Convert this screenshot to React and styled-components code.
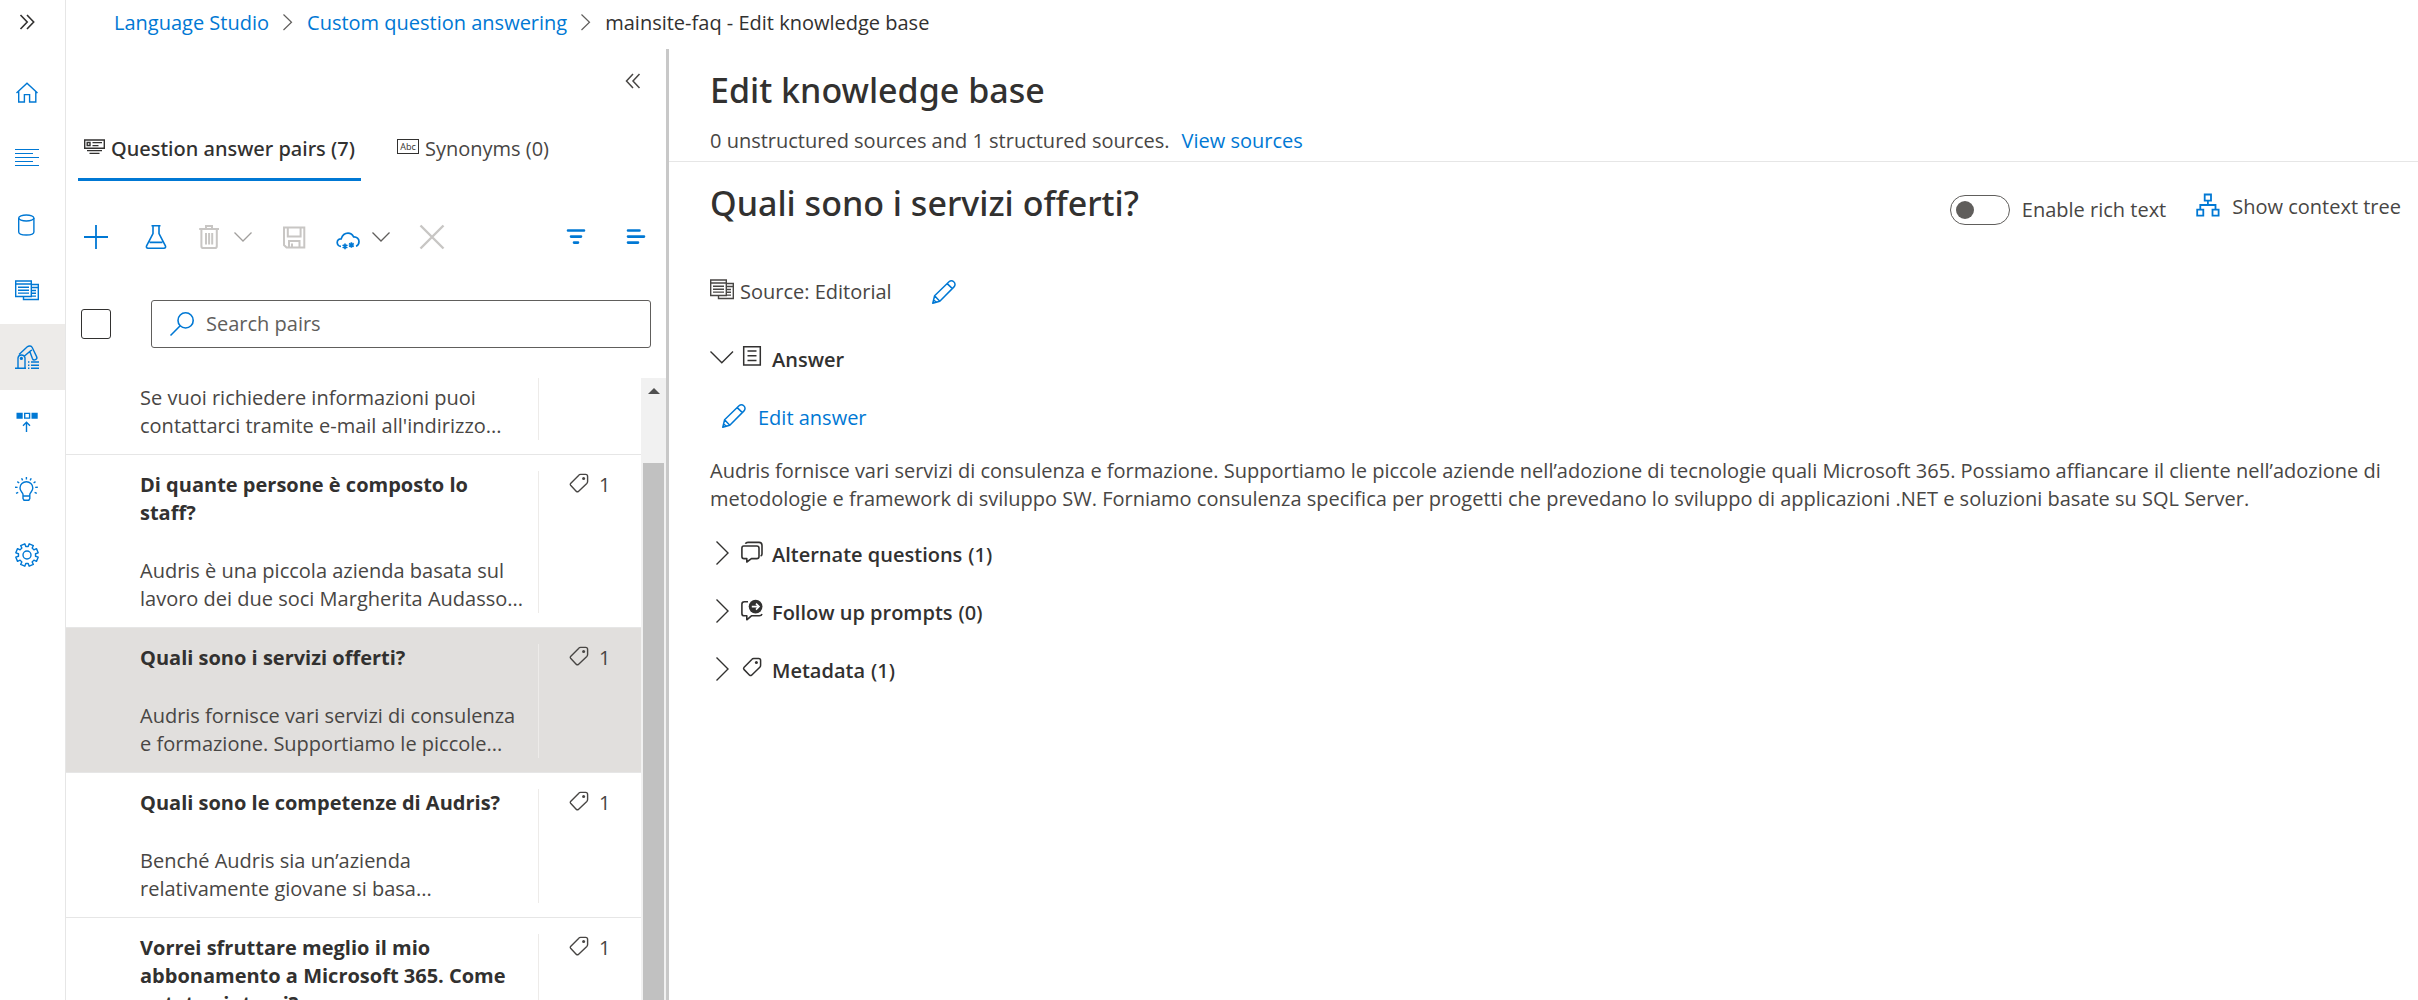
import React from "react";
import styled, { createGlobalStyle } from "styled-components";

const blue = "#0078d4";
const ink = "#323130";
const body = "#484644";
const disabled = "#c8c6c4";
const line = "#e6e6e6";

const GlobalStyle = createGlobalStyle`
  *, *::before, *::after { box-sizing: border-box; }
  html, body, #root { height: 100%; }
  body {
    margin: 0;
    background: #fff;
    color: ${ink};
    font: 400 20px/28px "Open Sans", "Noto Sans", sans-serif;
  }
  h1, h2, h3, p, ul, ol { margin: 0; padding: 0; }
  ul, ol { list-style: none; }
  button {
    font: inherit;
    color: inherit;
    background: none;
    border: 0;
    padding: 0;
    text-align: left;
    cursor: pointer;
  }
  a { color: ${blue}; text-decoration: none; }
`;

const Shell = styled.div`
  display: flex;
  height: 100vh;
  overflow: hidden;
`;

const Rail = styled.nav`
  flex: 0 0 66px;
  border-right: 1px solid ${line};
`;

const RailToggle = styled.button`
  display: flex;
  align-items: center;
  width: 100%;
  height: 44px;
  margin-bottom: 16px;
  padding-left: 15px;
  color: ${ink};
`;

const RailLink = styled.a`
  display: flex;
  align-items: center;
  height: 66px;
  padding-left: 15px;
  color: ${blue};
  background: ${(p) => (p.$active ? "#edebe9" : "transparent")};
`;

const Page = styled.div`
  flex: 1;
  min-width: 0;
  display: flex;
  flex-direction: column;
`;

const Crumbs = styled.ol`
  display: flex;
  align-items: center;
  gap: 12px;
  height: 49px;
  padding: 0 48px 3px;
`;

const Crumb = styled.li`
  display: flex;
  align-items: center;
  gap: 11px;
`;

const Columns = styled.div`
  flex: 1;
  min-height: 0;
  display: flex;
`;

const PairsPanel = styled.section`
  flex: 0 0 603px;
  display: flex;
  flex-direction: column;
  border-right: 3px solid #c8c8c8;
`;

const CollapseBar = styled.div`
  display: flex;
  justify-content: flex-end;
  align-items: center;
  height: 64px;
  padding-right: 21px;
`;

const Tabs = styled.div`
  display: flex;
  gap: 30px;
  padding-left: 12px;
`;

const Tab = styled.button`
  display: flex;
  gap: 6px;
  height: 68px;
  padding: 22px 6px 0;
  border-bottom: 3px solid ${(p) => (p.$selected ? blue : "transparent")};
  color: ${(p) => (p.$selected ? ink : body)};
  font-family: ${(p) => (p.$selected ? '"Noto Sans", sans-serif' : "inherit")};
  font-weight: ${(p) => (p.$selected ? 500 : 400)};
`;

const Toolbar = styled.div`
  display: flex;
  align-items: center;
  gap: 30px;
  height: 112px;
  padding: 0 20px 0 18px;
`;

const ToolGroup = styled.div`
  display: flex;
  align-items: center;
  gap: ${(p) => p.$gap}px;
  margin-left: ${(p) => (p.$end ? "auto" : "0")};
`;

const Tool = styled.button`
  display: flex;
  width: ${(p) => p.$width || 24}px;
  color: ${(p) => p.$tone || (p.disabled ? disabled : blue)};
`;

const SearchRow = styled.div`
  display: flex;
  align-items: center;
  gap: 40px;
  margin: 7px 15px 30px;
`;

const SelectAll = styled.input`
  appearance: none;
  width: 30px;
  height: 30px;
  margin: 0;
  border: 1px solid ${ink};
  border-radius: 3px;
`;

const SearchBox = styled.label`
  flex: 1;
  display: flex;
  align-items: center;
  gap: 12px;
  height: 48px;
  padding-left: 18px;
  border: 1px solid #605e5c;
  border-radius: 3px;
  color: ${blue};
`;

const SearchInput = styled.input`
  flex: 1;
  min-width: 0;
  border: 0;
  outline: 0;
  padding: 0;
  background: none;
  font: inherit;
  color: ${ink};
  &::placeholder { color: #605e5c; opacity: 1; }
`;

const ListArea = styled.div`
  flex: 1;
  min-height: 0;
  display: flex;
`;

const PairList = styled.ul`
  flex: 1;
  min-width: 0;
  overflow: hidden;
`;

const PairRow = styled.li`
  display: grid;
  grid-template-columns: 1fr 102px;
  padding: ${(p) => (p.$open ? 0 : 16)}px 0 14px 74px;
  border-bottom: 1px solid ${line};
  background: ${(p) => (p.$selected ? "#e1dfdd" : "transparent")};
`;

const PairText = styled.div`
  padding-top: ${(p) => (p.$open ? 6 : 0)}px;
  border-right: 1px solid #edebe9;
  white-space: pre-line;
`;

const PairQuestion = styled.h3`
  margin-bottom: 30px;
  font-size: 20px;
  line-height: 28px;
  font-weight: 700;
`;

const PairAnswer = styled.p`
  color: ${body};
`;

const TagCount = styled.span`
  display: flex;
  gap: 10px;
  padding-left: 30px;
  color: ${body};
`;

const Scrollbar = styled.div`
  flex: 0 0 25px;
  padding: 0 2px;
  background: #f1f1f1;
`;

const ScrollUp = styled.button`
  display: flex;
  justify-content: center;
  width: 100%;
  height: 85px;
  padding-top: 10px;
  color: #505050;
`;

const ScrollThumb = styled.div`
  height: 100%;
  background: #c1c1c1;
`;

const Main = styled.main`
  flex: 1;
  min-width: 0;
`;

const BaseHeader = styled.header`
  padding: 17px 41px 6px;
  border-bottom: 1px solid ${line};
`;

const Title = styled.h1`
  font-family: "Noto Sans", sans-serif;
  font-size: 34px;
  line-height: 48px;
  font-weight: 500;
`;

const Summary = styled.p`
  display: flex;
  gap: 12px;
  margin-top: 13px;
  color: ${body};
`;

const Detail = styled.div`
  padding: 17px 17px 0 41px;
`;

const DetailHead = styled.div`
  display: flex;
  justify-content: space-between;
`;

const DetailControls = styled.div`
  display: flex;
  gap: 30px;
  padding-top: 14px;
  color: ${body};
`;

const SwitchLabel = styled.label`
  display: flex;
  align-items: center;
  gap: 12px;
`;

const Switch = styled.input`
  appearance: none;
  display: flex;
  align-items: center;
  width: 60px;
  height: 30px;
  margin: 0;
  padding-left: 5px;
  border: 1px solid #605e5c;
  border-radius: 15px;
  &::before {
    content: "";
    width: 18px;
    height: 18px;
    border-radius: 50%;
    background: #605e5c;
  }
`;

const IconButton = styled.button`
  display: flex;
  gap: 12px;
`;

const SourceRow = styled.div`
  display: flex;
  gap: 40px;
  margin-top: 51px;
`;

const SourceLabel = styled.span`
  display: flex;
  gap: 6px;
  color: ${body};
`;

const Section = styled.section`
  margin-top: ${(p) => p.$gap || 30}px;
`;

const SectionToggle = styled.button`
  display: flex;
  gap: 7px;
  color: ${ink};
`;

const SectionTitle = styled.span`
  display: flex;
  gap: 6px;
  font-weight: 600;
`;

const SectionCount = styled.span`
  font-family: "Noto Sans", sans-serif;
  font-weight: 500;
`;

const EditAnswer = styled.button`
  display: flex;
  gap: 12px;
  margin: 30px 0 25px 12px;
  color: ${blue};
`;

const AnswerText = styled.p`
  color: ${body};
`;

const Svg = styled.svg`
  flex: none;
  display: block;
  fill: none;
  stroke: currentColor;
  stroke-width: ${(p) => p.$stroke || 1.4};
  overflow: visible;
`;

function Icon({ w = 24, h = 24, stroke, color, children }) {
  return (
    <Svg width={w} height={h} viewBox={`0 0 ${w} ${h}`} $stroke={stroke} color={color} aria-hidden="true">
      {children}
    </Svg>
  );
}

const ExpandIcon = () => (
  <Icon stroke={1.6}><path d="M5.5 5 12.2 12 5.5 19M12 5 18.7 12 12 19" /></Icon>
);
const CollapseIcon = () => (
  <Icon stroke={1.5} color="#484644"><path d="M12 5 5.5 12 12 19M18.5 5 12 12 18.5 19" /></Icon>
);
const HomeIcon = () => (
  <Icon><path d="M1.5 12 12 2.2 22.5 12M3.7 10.5V21H9.4V13.6H14.6V21H20.8V10.5" /></Icon>
);
const LinesIcon = () => (
  <Icon stroke={1}><path d="M0 2.5H24M0 6.5H18M0 10.5H24M0 14.5H18M0 18.5H24" /></Icon>
);
const DatabaseIcon = () => (
  <Icon>
    <ellipse cx="11.3" cy="5" rx="7.6" ry="3" />
    <path d="M3.7 5V19C3.7 20.7 7 22 11.3 22S18.9 20.7 18.9 19V5" />
  </Icon>
);
const docPaths = "M.7 2H16.3V17.5H.7ZM.7 5H16.3M3 8.3H14M3 11.2H14M3 14.1H14M16.3 5.5H23.3V20.5H8.5V17.5M16.3 8.5H23.3M16.3 11.5H21M16.3 14.3H21M16.3 17.1H21";
const DocsIcon = () => <Icon><path d={docPaths} /></Icon>;
const RobotIcon = () => (
  <Icon>
    <path d="M0 23.2H11M3 23V12.8A3.6 3.6 0 0 1 10 12.8V23M4 9.6 12.3 1.8C14 .4 16.3.8 17.2 2.5L21.6 11.6A2.3 2.3 0 0 1 17.4 13.6L14.8 6.4 9.8 10.8M14.8 6.4 17 5" />
    <circle cx="6.4" cy="13.4" r="1.6" fill="currentColor" stroke="none" />
    <path d="M13 17H14.4M16 17H24M13 20.2H14.4M16 20.2H24M13 23.3H14.4M16 23.3H24" />
  </Icon>
);
const DeployIcon = () => (
  <Icon>
    <path d="M1.5 1.7H7.7V7.7H1.5ZM16.5 1.7H22.7V7.7H16.5Z" fill="currentColor" stroke="none" />
    <path d="M9.7 2.4H14.6V7.1H9.7ZM11.5 21V11.5M8 14.8 11.5 11.3 15 14.8" />
  </Icon>
);
const BulbIcon = () => (
  <Icon>
    <path d="M8 19V17.5C8 15.5 5 14.5 5 11A6.4 6.2 0 0 1 17.8 11C17.8 14.5 14.8 15.5 14.8 17.5V19ZM8 19V21.5L9 23.2H13.8L14.8 21.5V19M11.4 0V2.6M6.6 1.2 7.6 3.4M16.2 1.2 15.2 3.4M2.3 4.7 4.2 6M20.5 4.7 18.6 6M0 10.2 2.6 10.4M22.8 10.2 20.2 10.4M1 16.3 3.2 15.3M21.8 16.3 19.6 15.3" />
  </Icon>
);

const gearPath = (() => {
  const points = [];
  for (let i = 0; i < 8; i += 1) {
    const a = (i * Math.PI) / 4 + Math.PI / 8;
    [[-0.25, 8.6], [-0.2, 11.4], [0.2, 11.4], [0.25, 8.6]].forEach(([d, r]) => {
      points.push(`${(12 + r * Math.cos(a + d)).toFixed(2)} ${(12 + r * Math.sin(a + d)).toFixed(2)}`);
    });
  }
  return `M${points.join("L")}Z`;
})();
const GearIcon = () => (
  <Icon>
    <path d={gearPath} strokeLinejoin="round" />
    <circle cx="12" cy="12" r="4" />
  </Icon>
);

const PairsIcon = () => (
  <Icon w={21} h={20}>
    <path d="M.7 5H20.3V13.2H.7ZM3.2 7.5H6V10.5H3.2ZM8.5 7.6H18M8.5 10.6H14.5M3 15.6H18M5.5 18.4H15.5" />
  </Icon>
);
const AbcFrame = styled.span`
  flex: none;
  display: flex;
  align-items: center;
  justify-content: center;
  width: 22px;
  height: 15px;
  margin-top: 4px;
  border: 1px solid ${ink};
  font-size: 9px;
  line-height: 12px;
  color: ${ink};
`;

const PlusIcon = () => <Icon stroke={1.8}><path d="M12 0V24M0 12H24" /></Icon>;
const FlaskIcon = () => (
  <Icon stroke={1.6}>
    <path d="M7.5.8H16.5M9 .8V8.5L2.6 20.8C2 22.2 2.7 23.2 4 23.2H20C21.3 23.2 22 22.2 21.4 20.8L15 8.5V.8M5.6 17.4H18.4" />
  </Icon>
);
const TrashIcon = () => (
  <Icon stroke={2}>
    <path d="M1.2 4H21M8 4V1H14V4M3.4 4V21.2Q3.4 23 5.2 23H17Q18.8 23 18.8 21.2V4M8 8V19.5M11.1 8V19.5M14.2 8V19.5" />
  </Icon>
);
const SaveIcon = () => (
  <Icon stroke={2}>
    <path d="M2 2.5H22.3V22.5H4.5L2 20ZM5.8 2.5V11.5H18.6V2.5M7 22.5V16H17.5V22.5M10 18.5V22" />
  </Icon>
);
const CloudIcon = () => (
  <Icon stroke={1.7}>
    <path d="M5 21.4C2.7 21.4 1.2 19.6 1.2 17.6C1.2 15 3.2 13.6 5.2 13.8C6.2 10.8 8.6 8.2 12 8.2C14.8 8.2 16.4 9.6 17.6 11.8C20.8 11.6 23 13.8 23 16.6C23 19 21.6 20.7 20 21.2" />
    <path d="M9 18.6V24.2M6.6 20 11.4 22.8M11.4 20 6.6 22.8M15.4 17.2V22.8M13 18.6 17.8 21.4M17.8 18.6 13 21.4" />
  </Icon>
);
const SmallChevron = () => <Icon w={18} stroke={1.3}><path d="M.5 7.5 9 16 17.5 7.5" /></Icon>;
const CloseIcon = () => <Icon stroke={2.4}><path d="M.5.5 23.5 23.5M23.5.5.5 23.5" /></Icon>;
const FilterIcon = () => (
  <Icon w={20} stroke={2.6}><path strokeLinecap="round" d="M2 5.5H18M5 11.6H15M8 17.6H12" /></Icon>
);
const ListIcon = () => (
  <Icon w={20} stroke={2.6}><path strokeLinecap="round" d="M2 5.5H13.5M2 11.6H18M2 17.6H12" /></Icon>
);
const SearchIcon = () => (
  <Icon stroke={1.6}><circle cx="15.6" cy="8.4" r="7.6" /><path d="M10.2 13.8.5 23.5" /></Icon>
);
const TagIcon = () => (
  <Icon w={20}>
    <path strokeLinejoin="round" d="M9.6 4.4Q10.4 3.4 11.6 3.4H16.6Q18.6 3.4 18.6 5.4V10.4Q18.6 11.6 17.8 12.4L9.4 20.4Q8.4 21.2 7.4 20.4L1.6 14.2Q.9 13.3 1.6 12.4Z" />
    <circle cx="14.6" cy="7.6" r="1.5" fill="currentColor" stroke="none" />
  </Icon>
);
const MetadataIcon = () => (
  <Icon stroke={1.5}>
    <path strokeLinejoin="round" d="M10.8 2.4Q11.6 1.4 12.8 1.4H17.6Q19.6 1.4 19.6 3.4V8.2Q19.6 9.4 18.8 10.2L10.6 18.2Q9.6 19 8.6 18.2L2.9 12.4Q2.2 11.5 2.9 10.6Z" />
    <circle cx="15.4" cy="5.6" r="1.5" fill="currentColor" stroke="none" />
  </Icon>
);
const ArrowUpIcon = () => (
  <Icon w={12} h={6}><path d="M0 6 6 0 12 6Z" fill="currentColor" stroke="none" /></Icon>
);
const CrumbChevron = () => (
  <Icon w={15} stroke={1.2} color="#605e5c"><path d="M3.5 3.5 11.5 11.2 3.5 19" /></Icon>
);
const PencilIcon = () => (
  <Icon stroke={1.5} color={blue}>
    <path strokeLinejoin="round" d="M.8 23.2 2.6 15.8 17 1.8C18.4.5 20.4.5 21.8 1.8C23.4 3.2 23.4 5.4 22 6.9L7.8 21.3ZM2.6 15.8 7.8 21.3M15.2 3.6 20.4 8.6M1.6 19.8 4.2 22.3" />
  </Icon>
);
const TreeIcon = () => (
  <Icon stroke={1.8} color={blue}>
    <path d="M8.7 1.5H15V7.6H8.7ZM1.2 16.6H7.3V22.6H1.2ZM16.5 16.6H22.6V22.6H16.5ZM11.9 7.6V12M4.3 16.6V12H19.5V16.6" />
  </Icon>
);
const ChevronDown = () => <Icon stroke={1.4}><path d="M.5 5.5 11.8 16.8 23 5.5" /></Icon>;
const ChevronRight = () => <Icon stroke={1.4}><path d="M6.5.5 18 12 6.5 23.5" /></Icon>;
const AnswerIcon = () => (
  <Icon stroke={1.5}><path d="M2.7.8H19.3V19H2.7ZM6.5 5H15.5M6.5 9.8H15.5M6.5 14.6H15.5" /></Icon>
);
const ChatIcon = () => (
  <Icon stroke={1.6}>
    <path strokeLinejoin="round" d="M2.8 5H15.8Q18 5 18 7.2V15.4Q18 17.6 15.8 17.6H10.4L5.8 21V17.6H3Q.9 17.6.9 15.4V7.2Q.9 5 2.8 5ZM4.4 2.8Q5 1.4 7 1.4H18Q21 1.4 21 4.4V13Q21 14.4 19.6 15" />
  </Icon>
);
const FollowIcon = () => (
  <Icon stroke={1.6}>
    <path strokeLinejoin="round" d="M7 2.8H3.4Q.9 2.8.9 5.2V14.4Q.9 16.8 3.4 16.8H5.8V20.8L10.4 16.8H18.4Q20.4 16.8 21 15" />
    <circle cx="14.6" cy="7.6" r="6.9" fill="currentColor" stroke="none" />
    <path d="M10.8 7.6H18M15 4.6 18 7.6 15 10.6" stroke="#fff" />
  </Icon>
);

const railItems = [
  ["Home", HomeIcon],
  ["Text", LinesIcon],
  ["Data", DatabaseIcon],
  ["Manage sources", DocsIcon],
  ["Edit knowledge base", RobotIcon],
  ["Deploy knowledge base", DeployIcon],
  ["Review suggestions", BulbIcon],
  ["Settings", GearIcon],
];

const pairs = [
  { answer: "Se vuoi richiedere informazioni puoi\ncontattarci tramite e-mail all'indirizzo..." },
  {
    question: "Di quante persone è composto lo\nstaff?",
    answer: "Audris è una piccola azienda basata sul\nlavoro dei due soci Margherita Audasso...",
    tags: 1,
  },
  {
    question: "Quali sono i servizi offerti?",
    answer: "Audris fornisce vari servizi di consulenza\ne formazione. Supportiamo le piccole...",
    tags: 1,
    selected: true,
  },
  {
    question: "Quali sono le competenze di Audris?",
    answer: "Benché Audris sia un’azienda\nrelativamente giovane si basa...",
    tags: 1,
  },
  { question: "Vorrei sfruttare meglio il mio\nabbonamento a Microsoft 365. Come\npotete aiutarci?", tags: 1 },
];

const sections = [
  { title: "Alternate questions", count: 1, icon: ChatIcon, gap: 28 },
  { title: "Follow up prompts", count: 0, icon: FollowIcon },
  { title: "Metadata", count: 1, icon: MetadataIcon },
];

function Pair({ question, answer, tags, selected }) {
  const open = !question;
  return (
    <PairRow $selected={selected} $open={open}>
      <PairText $open={open}>
        {question && <PairQuestion>{question}</PairQuestion>}
        {answer && <PairAnswer>{answer}</PairAnswer>}
      </PairText>
      {tags && (
        <TagCount>
          <TagIcon />
          {tags}
        </TagCount>
      )}
    </PairRow>
  );
}

export default function App() {
  return (
    <>
      <GlobalStyle />
      <Shell>
        <Rail aria-label="Main">
          <RailToggle aria-label="Expand menu"><ExpandIcon /></RailToggle>
          {railItems.map(([label, Glyph], i) => (
            <RailLink key={label} href="#" aria-label={label} $active={i === 4}><Glyph /></RailLink>
          ))}
        </Rail>
        <Page>
          <Crumbs>
            <Crumb><a href="#">Language Studio</a><CrumbChevron /></Crumb>
            <Crumb><a href="#">Custom question answering</a><CrumbChevron /></Crumb>
            <Crumb>mainsite-faq - Edit knowledge base</Crumb>
          </Crumbs>
          <Columns>
            <PairsPanel>
              <CollapseBar>
                <button aria-label="Collapse panel"><CollapseIcon /></button>
              </CollapseBar>
              <Tabs role="tablist">
                <Tab role="tab" aria-selected="true" $selected><PairsIcon />Question answer pairs (7)</Tab>
                <Tab role="tab" aria-selected="false"><AbcFrame>Abc</AbcFrame>Synonyms (0)</Tab>
              </Tabs>
              <Toolbar>
                <Tool $width={30} aria-label="Add"><PlusIcon /></Tool>
                <Tool aria-label="Test"><FlaskIcon /></Tool>
                <ToolGroup $gap={12}>
                  <Tool disabled aria-label="Delete"><TrashIcon /></Tool>
                  <Tool $width={18} disabled $tone="#a19f9d" aria-label="Delete options"><SmallChevron /></Tool>
                </ToolGroup>
                <Tool disabled aria-label="Save"><SaveIcon /></Tool>
                <ToolGroup $gap={12}>
                  <Tool aria-label="Cloud actions"><CloudIcon /></Tool>
                  <Tool $width={18} $tone="#605e5c" aria-label="Cloud options"><SmallChevron /></Tool>
                </ToolGroup>
                <Tool disabled aria-label="Discard"><CloseIcon /></Tool>
                <ToolGroup $gap={40} $end>
                  <Tool $width={20} aria-label="Filter"><FilterIcon /></Tool>
                  <Tool $width={20} aria-label="View options"><ListIcon /></Tool>
                </ToolGroup>
              </Toolbar>
              <SearchRow>
                <SelectAll type="checkbox" aria-label="Select all pairs" />
                <SearchBox>
                  <SearchIcon />
                  <SearchInput type="text" placeholder="Search pairs" aria-label="Search pairs" />
                </SearchBox>
              </SearchRow>
              <ListArea>
                <PairList>
                  {pairs.map((pair) => <Pair key={pair.question || pair.answer} {...pair} />)}
                </PairList>
                <Scrollbar>
                  <ScrollUp aria-label="Scroll up"><ArrowUpIcon /></ScrollUp>
                  <ScrollThumb />
                </Scrollbar>
              </ListArea>
            </PairsPanel>
            <Main>
              <BaseHeader>
                <Title>Edit knowledge base</Title>
                <Summary>
                  0 unstructured sources and 1 structured sources.
                  <a href="#">View sources</a>
                </Summary>
              </BaseHeader>
              <Detail>
                <DetailHead>
                  <Title as="h2">Quali sono i servizi offerti?</Title>
                  <DetailControls>
                    <SwitchLabel>
                      <Switch type="checkbox" role="switch" />
                      Enable rich text
                    </SwitchLabel>
                    <IconButton><TreeIcon />Show context tree</IconButton>
                  </DetailControls>
                </DetailHead>
                <SourceRow>
                  <SourceLabel><DocsIcon />Source: Editorial</SourceLabel>
                  <button aria-label="Edit source"><PencilIcon /></button>
                </SourceRow>
                <Section $gap={40}>
                  <SectionToggle aria-expanded="true">
                    <ChevronDown />
                    <AnswerIcon />
                    <SectionTitle>Answer</SectionTitle>
                  </SectionToggle>
                  <EditAnswer><PencilIcon />Edit answer</EditAnswer>
                  <AnswerText>
                    Audris fornisce vari servizi di consulenza e formazione. Supportiamo le piccole aziende
                    nell’adozione di tecnologie quali Microsoft 365. Possiamo affiancare il cliente
                    nell’adozione di metodologie e framework di sviluppo SW. Forniamo consulenza specifica
                    per progetti che prevedano lo sviluppo di applicazioni .NET e soluzioni basate su SQL
                    Server.
                  </AnswerText>
                </Section>
                {sections.map(({ title, count, icon: Glyph, gap }) => (
                  <Section key={title} $gap={gap}>
                    <SectionToggle aria-expanded="false">
                      <ChevronRight />
                      <Glyph />
                      <SectionTitle>{title} <SectionCount>({count})</SectionCount></SectionTitle>
                    </SectionToggle>
                  </Section>
                ))}
              </Detail>
            </Main>
          </Columns>
        </Page>
      </Shell>
    </>
  );
}
